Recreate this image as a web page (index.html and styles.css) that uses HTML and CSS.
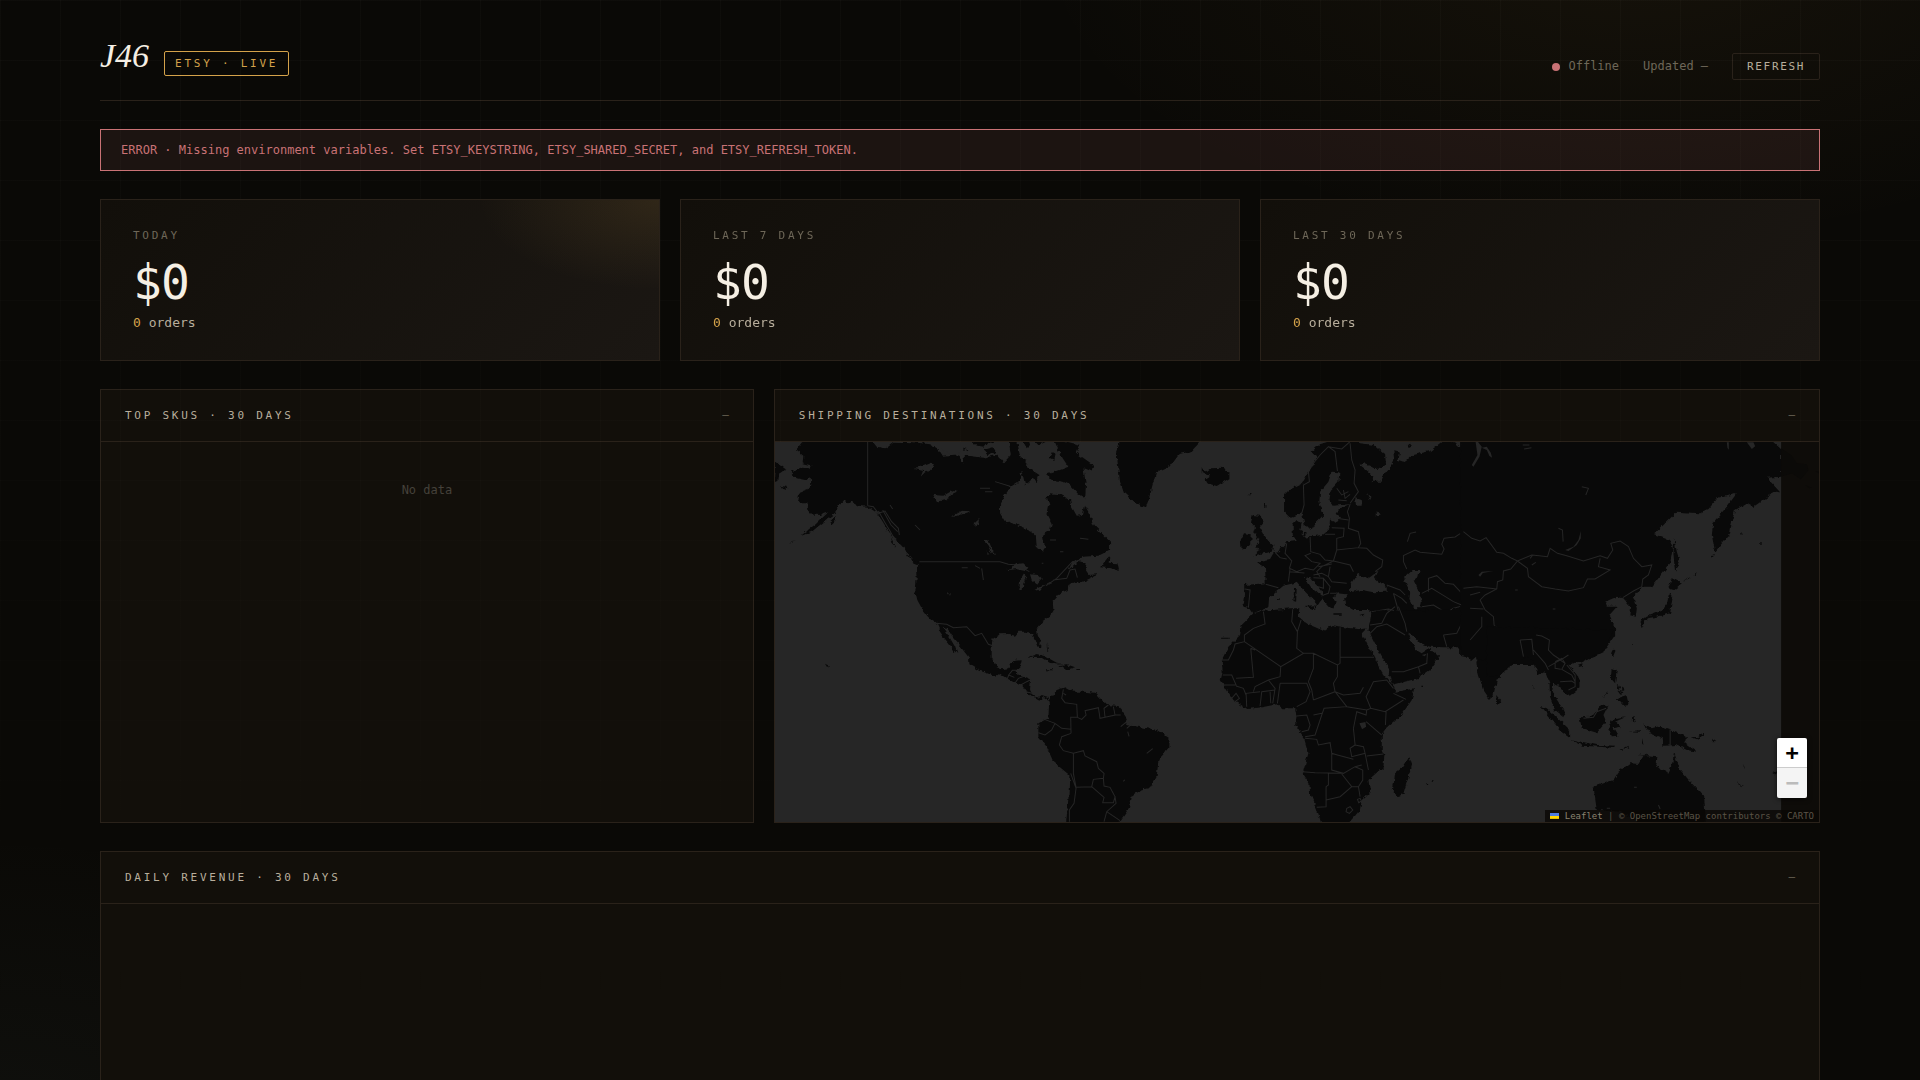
FILE: index.html
```
<!DOCTYPE html>
<html lang="en">
<head>
    <meta charset="UTF-8">
    <meta name="viewport" content="width=device-width, initial-scale=1.0">
    <title>J46 Etsy Live</title>
    <link rel="stylesheet" href="styles.css">
</head>
<body>
    <div class="container">
        <header class="header">
            <div class="brand">
                <h1 class="logo">J46</h1>
                <span class="badge">ETSY · LIVE</span>
            </div>
            <div class="status">
                <span class="status-item"><span class="dot"></span>Offline</span>
                <span>Updated —</span>
                <button class="refresh" type="button">REFRESH</button>
            </div>
        </header>

        <div class="error" role="alert">ERROR · Missing environment variables. Set ETSY_KEYSTRING, ETSY_SHARED_SECRET, and ETSY_REFRESH_TOKEN.</div>

        <!-- Totals -->
        <section class="stats">
            <div class="stat stat-today">
                <div class="stat-label">TODAY</div>
                <div class="stat-value">$0</div>
                <div class="stat-sub"><span class="accent">0</span> orders</div>
            </div>
            <div class="stat">
                <div class="stat-label">LAST 7 DAYS</div>
                <div class="stat-value">$0</div>
                <div class="stat-sub"><span class="accent">0</span> orders</div>
            </div>
            <div class="stat">
                <div class="stat-label">LAST 30 DAYS</div>
                <div class="stat-value">$0</div>
                <div class="stat-sub"><span class="accent">0</span> orders</div>
            </div>
        </section>

        <div class="columns">
            <section class="panel">
                <div class="panel-head">
                    <h2>TOP SKUS · 30 DAYS</h2>
                    <span class="meta">—</span>
                </div>
                <div class="empty">No data</div>
            </section>

            <section class="panel">
                <div class="panel-head">
                    <h2>SHIPPING DESTINATIONS · 30 DAYS</h2>
                    <span class="meta">—</span>
                </div>
                <div class="map">
                    <svg class="world" viewBox="15 21 3132 1140" preserveAspectRatio="xMidYMid slice" aria-hidden="true">
                        <defs>
                            <filter id="coast" color-interpolation-filters="sRGB">
                                <feTurbulence type="fractalNoise" baseFrequency="0.07" numOctaves="2" seed="4" result="n"/>
                                <feDisplacementMap in="SourceGraphic" in2="n" scale="14" xChannelSelector="R" yChannelSelector="G"/>
                            </filter>
                        </defs>
                        <rect class="sea" x="0" y="0" width="3033" height="1170"/>
                        <g>
                            <!-- North America -->
                            <g class="land" filter="url(#coast)">
                                <path d="M105 10L78 45 100 62 98 85 128 92 115 100 95 98 63 112 80 130 105 135 122 130 124 150 118 160 90 170 82 190 92 205 112 205 118 238 150 240 175 232 140 265 92 303 125 290 160 262 190 240 205 215 222 195 232 205 245 200 265 212 293 215 318 232 335 255 350 280 362 300 385 318 400 335 410 352 430 372 448 390 438 400 440 430 436 470 442 495 458 525 475 547 498 562 510 590 525 612 540 630 562 658 555 635 540 610 518 575 532 580 550 610 575 640 597 668 598 688 630 707 675 723 690 718 710 730 725 738 735 745 755 750 770 770 790 787 808 797 818 785 835 797 832 785 815 780 802 790 788 780 780 765 783 733 760 723 742 723 740 705 750 695 755 673 730 675 715 700 695 703 680 697 665 665 665 630 668 612 690 598 715 597 735 602 745 590 770 590 785 595 793 610 800 630 810 638 812 620 803 598 800 580 815 560 840 542 850 525 848 500 862 485 870 475 893 465 895 450 918 440 930 445 985 418 955 420 945 405 950 385 925 378 895 405 905 385 940 365 985 362 1020 345 1020 320 990 290 970 270 960 240 945 212 938 240 920 242 905 215 900 195 870 178 838 175 830 185 838 210 832 240 845 265 840 285 818 300 825 335 820 350 800 335 797 300 785 290 750 275 730 262 708 265 690 235 690 205 705 180 722 155 745 140 755 110 765 150 790 130 800 145 808 120 785 105 768 95 770 75 750 65 740 10 715 10 722 60 700 85 680 60 640 68 580 60 520 65 505 42 480 28 430 22 370 20 345 40 320 35 300 10Z"/>
                                <path d="M850 10L930 30 920 55 970 90 965 110 940 100 948 150 945 190 925 178 900 150 880 140 850 135 835 130 832 118 870 105 895 95 878 70 865 45Z"/>
                                <path d="M15 80L30 90 46 102 28 115 25 135 12 140ZM30 153l22 2 3 8-18-4ZM845 52l12 5-4 18-14-6ZM178 260l18-14 2 8-14 14ZM55 325l22-10-10 3ZM1010 373l8-10-2 20 26 2 5 22-30-8-27-2ZM165 686l12 6-6 4ZM362 305l14 30-8-8ZM405 355l38 26 8 12-20-8Z"/>
                                <path d="M778 665L800 657 825 664 860 683 885 686 840 684 812 667ZM868 690L890 688 915 697 888 705ZM828 703h18v3h-18ZM922 702h14v3h-14ZM830 625l5 22-4-5Z"/>
                                <path d="M600 10l15 20 25 5 12-15 18 5 10-15ZM580 38l15 5-14 12ZM640 45l30-8 8 15-22 8ZM755 10l15 30 10-10-5-20ZM785 10l20 20 20-8 10-12Z"/>
                            </g>
                            <g class="sea" filter="url(#coast)">
                                <path d="M430 98L455 95 485 83 492 95 482 108 465 112 452 125 460 105ZM490 180L520 182 550 165 565 168 540 180 530 195 500 200ZM545 243l28-16 28 2-25 8-24 8ZM640 315L655 315 665 340 675 360 665 355 652 330ZM650 345l8 15-5-3ZM615 260l12-10-2 20-12 8ZM712 405L735 388 760 385 775 398 765 408 740 403ZM762 415L772 425 760 445 758 465 748 465 750 435ZM780 418L805 420 815 430 800 448 785 435ZM788 468L810 455 828 452 805 465ZM825 450l25-13-4 8-18 6ZM530 470l12 8-2 4ZM515 40l25 15-15 5ZM565 55l22-14 10 8-15 15-4 22-6-12Z"/>
                            </g>
                            <g class="border">
                                <path d="M293 21V212M448 380H690M293 212L310 215 325 235 345 228 365 260 385 280 388 300M690 380L715 388 740 390 778 410M828 452L860 430 905 382 940 372M850 435L890 430 900 405 915 402 922 428M498 565L530 568 550 578 590 575 615 602 635 595 655 628 668 632M325 228l20 35 15 25 12 22M338 225l25 45 20 20M635 400l5 35M575 398h18M615 392l15 8M435 270l15 15M360 210l8 12M630 160h30M645 170h22M675 140l45 14M840 315h18M815 385h5M870 350h10M930 310l25 3"/>
                                <path d="M710 737L716 720 727 706 742 706M716 720L733 727M735 744L745 730 762 724M752 750L770 740 785 733M768 770l18 5"/>
                            </g>

                            <!-- South America -->
                            <g transform="translate(390 615)">
                                <path class="land" filter="url(#coast)" d="M445 182L470 150 495 142 520 155 550 155 585 158 600 175 620 195 655 198 680 235 675 255 725 262 770 270 808 295 808 320 775 360 770 410 750 445 725 448 695 470 690 500 655 550 498 550 505 480 508 405 460 365 440 320 415 290 415 250 445 235 447 195Z"/>
                                <path class="border" d="M490 148L485 175 495 188 530 193 532 232 512 232 513 280M532 232L545 238 558 225 555 212 595 203 600 235 615 232M615 232L612 205 625 195M640 200L645 225 615 232M645 225L662 225M425 235L465 250 485 265 513 268M465 250L455 270 435 285 415 278M513 280L485 290 478 315 490 332 520 340 550 332 555 348 590 365 595 385 612 400 610 415 580 418 575 440 528 442 520 400 520 340M512 400L528 445 522 490 508 510 508 545M610 415L612 438 630 442 645 470 640 488 608 488 612 472 575 440M645 470L648 490 620 515 612 545M620 515L660 542M662 260L680 245 695 252 680 265M490 160l8 5M740 340l18-14M683 275l4 14M670 424l4-5"/>
                            </g>

                            <!-- Greenland, Europe, Russia -->
                            <g transform="translate(1050 0)">
                                <g class="land" filter="url(#coast)">
                                    <path d="M0 10L-10 60 -5 100 0 140 12 175 45 205 78 217 88 185 100 140 108 112 150 92 175 58 215 48 250 10Z"/>
                                    <path d="M245 97L262 110 275 100 310 98 328 110 328 130 290 153 262 145 255 132 270 122 245 115Z"/>
                                    <path d="M398 240L425 243 430 260 418 275 432 300 445 318 460 332 455 350 430 355 400 362 420 345 405 340 418 320 410 305 400 290 405 275 392 262ZM372 295L395 298 393 330 365 345 362 315ZM435 207h4v8h-4ZM386 177h5v4h-5Z"/>
                                    <path d="M600 28L575 50 590 70 560 120 545 145 510 162 492 180 492 230 510 248 530 240 545 232 555 275 575 285 590 260 610 240 598 200 600 170 625 140 635 110 658 112 655 140 632 165 628 195 640 212 690 208 660 222 650 232 660 250 640 262 630 250 628 280 605 300 570 305 545 310 560 295 540 285 545 265 530 255 518 268 518 300 530 318 500 322 485 335 480 350 460 355 450 372 410 380 435 400 437 445 400 448 372 450 375 480 370 515 390 520 400 535 445 515 447 490 475 465 490 452 520 445 530 440 550 465 575 490 590 505 580 525 588 518 600 500 610 488 575 460 555 430 570 425 585 445 605 470 612 500 625 515 638 520 650 500 640 490 650 475 680 478 672 490 675 510 700 525 745 525 755 530 750 575 830 575 860 590 940 630 1120 640 1120 20 1090 10 1075 70 1060 95 1040 90 1035 50 1005 22 965 20 930 48 880 60 850 80 835 75 840 50 820 45 822 75 810 95 790 120 785 140 755 140 760 125 745 110 720 90 735 85 770 102 798 90 795 60 760 30 720 25 690 10 640 15Z"/>
                                    <path d="M522 460l8 0-2 40-8-2ZM553 513l28-2-4 12ZM640 535h25v4h-25ZM718 540l15-4-5 7ZM468 490h8v5h-8ZM860 30l10-4 6 8-10 5ZM303 608h26v3h-26Z"/>
                                </g>
                                <g class="sea" filter="url(#coast)">
                                    <path d="M690 450L712 415 725 425 745 430 775 408 765 428 800 458 800 470 760 472 725 465 690 472ZM850 430L875 408 898 408 895 425 880 435 895 465 905 500 900 520 880 520 868 495 870 470ZM705 190L722 195 725 212 708 212ZM740 170l14 20-4 8ZM770 228l10 12-10 6ZM640 248l10-5 5 15-10 5ZM545 272l12 16-12 16Z"/>
                                </g>
                                <g class="border">
                                    <path d="M545 235L552 210 550 150 568 140 565 110 580 85 600 60 625 35 645 50 652 108M625 35L665 42 690 20M690 25L695 75 705 105 702 145 715 170 690 205M650 160l15 20 20-10M670 165l5 25 15-12M655 195l25 2"/>
                                    <path d="M690 208L682 230 688 250 685 280 715 290 722 325 715 338 650 345 650 310 670 305 672 280 635 278M650 250L685 255M615 298h30M570 305L572 350 600 358 615 375 640 378 650 345M500 325L495 355 515 378 508 400 530 410 555 400 580 405 600 385 575 380 555 362 572 355M465 352L480 368 500 372M640 378L690 390 700 410M640 378L605 395 590 410 600 425M630 395L625 425 635 440 680 445M625 425L605 415 580 420M715 338L740 340 760 360 788 375 785 395 765 410M437 448L475 458M510 400L505 440M375 462L390 465 385 518M580 428L610 430 610 460 595 455M610 430L630 455 625 475 610 480M630 475L650 475M560 432l35 28M595 395l40-8M508 410l45 4"/>
                                    <path d="M800 450L840 465 855 480M820 475L830 510 835 530 805 522 755 530M805 522L798 550 765 570 750 575M835 530L845 570 860 595M820 475L845 490 860 505M905 515L940 510 965 525 968 590 980 605M968 590L1010 598 1040 565 1058 510M968 540L1000 520 1030 512 1060 510M905 475L935 460 960 475 1000 500 1030 512M925 470L925 430 950 422 975 445 1000 448 1030 480 1080 465M850 380L850 362 885 345 900 352 965 358 972 342 965 328 972 310 1005 306 1020 296 1040 292 1055 308 1080 300M850 380l10 22M862 320l8-25 18-4"/>
                                </g>
                            </g>

                            <!-- Africa, Arabia, India -->
                            <g transform="translate(1290 495)">
                                <g class="land" filter="url(#coast)">
                                    <path d="M160 40L190 32 275 25 298 25 295 50 330 75 370 92 395 75 430 82 480 88 500 85 485 100 520 165 545 215 580 262 590 275 642 265 635 300 600 350 560 385 545 405 545 450 553 465 550 500 505 540 510 575 485 600 480 630 440 675 365 675 350 625 330 580 328 550 308 520 325 460 312 415 285 375 290 350 285 325 250 325 235 312 185 322 142 327 100 300 62 240 68 215 65 180 85 140 120 105 125 75Z"/>
                                    <path d="M515 35L505 90 530 140 560 195 575 255 655 235 690 210 717 170 688 145 665 160 648 150 620 95 640 105 660 130 690 140 730 142 775 142 800 165 810 185 828 175 832 215 850 270 868 296 880 285 890 240 920 205 970 170 970 20Z"/>
                                    <path d="M888 285L905 305 892 315ZM628 472L636 495 610 580 595 590 578 575 585 520 610 500ZM679 549h5v4h-5ZM695 541h5v4h-5ZM664 257h5v4h-5Z"/>
                                </g>
                                <path class="sea" d="M478 370l18-4 2 14-12 8ZM690 152l10-10 8 14ZM665 165l15-4-6 8Z"/>
                                <g class="border">
                                    <path d="M190 35L195 72 160 85 133 105 133 125 105 132 100 150 85 180 65 180M133 125L242 200 310 160 290 145 292 95 275 65 278 28M292 95L303 60M420 82L420 172 522 172M420 172L420 190 412 195 340 160 310 160M412 195L412 230 400 250 405 275M340 160L340 205 325 245 335 270 340 300M242 200L240 230 205 240 165 260 160 275M152 145L160 232 108 235M152 145L165 150M68 225L95 225 108 255 65 255M240 250L320 250 330 275 318 305 290 320M240 250L232 310M205 240L225 265 218 310M210 275L212 310M180 318L185 275 225 270M140 320L138 280 180 275M108 258L130 265 138 285M95 295L108 280 118 295 105 305M340 300L405 275 440 320 372 325 365 345 345 405 315 410M405 275L430 285 480 280 490 262M440 320L500 330 512 325 498 290 520 245 560 240 580 265M512 325L555 335 610 300M580 280L618 298M558 335L556 375M500 330L498 345 470 335 465 360 460 385M498 365L545 405M460 385L465 435 450 445 455 470 495 460 490 440 465 435M495 460L505 510M500 468L550 462M315 415L350 418 355 435 390 428 395 460 412 465 460 478M395 460L395 510 430 520 465 500 485 495M308 515L345 518 425 520M385 520L385 555 378 560 378 620 350 622M378 600L420 590 455 560 425 522M455 560L475 560 488 540 488 510 465 500M475 560L480 590M440 625L450 620 458 630 448 640 438 635ZM472 598l8-3 4 8-8 5ZM290 348L320 345 330 375 325 390 305 395M365 340L340 345"/>
                                    <path d="M510 100L530 80 560 72 615 105M510 75L545 70 560 40 585 20M575 215L610 215 655 200 680 190 682 160M655 200L660 220M730 105L770 100 785 70 815 40M740 140L730 105M790 160L812 140 805 120 845 80 848 50 880 80 895 100 958 130M895 95L958 120M845 80L840 45M595 20L615 70 620 95"/>
                                </g>
                            </g>

                            <!-- East Asia -->
                            <g transform="translate(2100 0)">
                                <g class="land" filter="url(#coast)">
                                    <path d="M-30 10L900 10 933 40 933 125 890 128 930 172 915 170 850 215 830 205 795 225 785 260 780 295 735 350 725 300 730 262 770 215 800 175 765 185 745 187 715 222 690 235 620 230 552 298 600 315 608 340 600 385 545 455 515 455 490 490 500 520 497 545 478 540 480 515 460 490 440 485 405 500 410 515 440 515 418 540 435 575 435 600 400 650 335 680 200 690 100 690 -30 660Z"/>
                                    <path d="M597 475L607 490 600 535 560 545 530 550 515 580 508 560 530 545 570 530 590 505ZM605 430L635 445 610 465 595 460ZM612 310L620 350 628 375 615 410 610 360ZM812 290l6 8-3 2ZM870 325h5v4h-5ZM722 364l10-8-4 8ZM640 440l20-14-5 7ZM670 422l10-7-3 5ZM486 627h5v2h-5Z"/>
                                </g>
                                <path class="sea" d="M285 345L310 335 325 315 332 288 332 310 320 330 295 348ZM25 420L35 410 70 408 38 414 30 425ZM15 10L35 35 28 65 10 95 5 90 22 60ZM35 38l15-3 12 18 4 15-8-5-8-18ZM0 680l18-15 4 60-22 0ZM830 22l20 0 5 12-10 8ZM770 22h6v22l-4-5Z"/>
                                <g class="border">
                                    <path d="M-20 290L5 310 30 318 48 308 80 352 100 355 125 370 142 378 185 360 232 365 240 340 262 355 290 362 340 378 390 362 412 370 428 345 422 325 450 318 475 335 490 370 515 395 545 390 535 420 518 432 515 455M142 378L172 400 175 425 215 455 255 462 295 468 340 458 352 432 375 432 420 405 385 395 390 370M142 378L122 402 100 408 98 435 82 440 80 462 45 480 30 495 45 525 70 545 72 570 90 590 150 612 155 625 120 620 85 605 75 580M150 612L182 612 185 622 155 625M205 605L220 605 235 615 240 650 258 660 285 658 310 670M182 630L185 660M-20 460L20 455 80 462M0 480l30-8M0 520L40 522M35 545L35 575 0 615M458 488L490 468 515 455M158 30h20M162 42l22-4M335 155l20 5-8 20M265 280l12 5 2 35M180 370l8-10M135 465h8M248 522h8M185 390l12-8"/>
                                </g>
                            </g>

                            <!-- South-east Asia and Australia -->
                            <g transform="translate(2190 495)">
                                <g class="land" filter="url(#coast)">
                                    <path d="M340 90L310 155 245 185 215 185 205 195 238 235 238 265 205 290 180 260 160 250 155 275 190 330 193 352 165 330 150 290 148 250 135 215 115 225 95 180 80 170 50 180 0 225 -40 230 -40 80Z"/>
                                    <path d="M120 318L140 325 210 390 210 412 180 390ZM210 418L290 435 345 437 340 443 250 437ZM238 352L275 350 305 312 322 320 310 345 318 365 290 398 245 385ZM335 360L375 352 345 365 362 380 340 385 355 410 335 412 325 385ZM430 370L455 385 480 378 530 395 560 415 555 430 590 455 560 450 530 435 490 437 488 415 450 400Z"/>
                                    <path d="M280 560L340 540 355 515 390 490 415 492 430 468 472 472 465 495 505 518 515 495 522 458 540 510 575 550 612 590 617 660 612 675 430 675 360 635 290 630Z"/>
                                    <path d="M335 205L350 210 345 250 332 235ZM350 295L380 285 385 312 368 315ZM350 255l10 5-4 12ZM365 258l8 12-6 4ZM352 272l14 4-4 10ZM340 145L347 150 338 172 333 160ZM235 195L250 190 248 205ZM308 292l18-18-4 8ZM575 412l22-2 10-12 3 4-15 17ZM385 394l35-3v4ZM400 348l4 20-6-8ZM358 452l25-12 5 2-24 11ZM415 466l25-2v4ZM708 543l24 16-12-4ZM630 412l18 14-4 1ZM655 430l16 8ZM682 450l10 8ZM728 492l9 16-6-8ZM820 520l10-6v10ZM595 388l14 10ZM97 250l3 15-4-5ZM125 342l12 10ZM145 370l8 10ZM426 415l4 20-5-6Z"/>
                                </g>
                                <g class="border">
                                    <path d="M510 388V440M60 120L95 118 100 165M60 120L70 170M108 105L125 108 148 120 145 150 160 165 182 180 205 165M100 150L135 190 145 210M145 200L180 180 195 190 185 208 215 225 225 245M182 208L165 205 165 190M200 195L225 225 225 260 205 270M180 245L215 243 225 250M250 355L280 352 290 335 318 325M320 625h10M475 615l5 12M402 562h8M165 185l20-10 10 15"/>
                                </g>
                            </g>
                        </g>
                        <path class="tile-fade" d="M3033 40L3065 62 3080 85 3110 88 3115 105 3092 133 3065 115 3033 125ZM3135 108l12 2v6ZM3105 150l20 8-8 2Z"/>
                    </svg>
                    <div class="zoom">
                        <button type="button" aria-label="Zoom in">+</button>
                        <button type="button" aria-label="Zoom out" disabled>−</button>
                    </div>
                    <div class="attribution">
                        <a href="#"><svg class="flag" viewBox="0 0 9 6" aria-hidden="true"><path fill="#4C7BE1" d="M0 0h9v3H0z"/><path fill="#FFD500" d="M0 3h9v2H0z"/><path fill="#E0BC00" d="M0 5h9v1H0z"/></svg> Leaflet</a> | © OpenStreetMap contributors © CARTO
                    </div>
                </div>
            </section>
        </div>

        <section class="panel">
            <div class="panel-head">
                <h2>DAILY REVENUE · 30 DAYS</h2>
                <span class="meta">—</span>
            </div>
            <div class="chart"></div>
        </section>
    </div>
</body>
</html>
```
FILE: styles.css
```
:root {
    --bg: #0a0906;
    --panel: #120f0a;
    --panel-2: #1b1713;
    --line: #2a221a;
    --text: #f5efe4;
    --text-dim: #b8ae9c;
    --muted: #6e6758;
    --faint: #45413a;
    --gold: #d4a24a;
    --red: #c97275;
}

* {
    box-sizing: border-box;
    margin: 0;
    padding: 0;
}

body {
    min-height: 100vh;
    font-family: "DejaVu Sans Mono", monospace;
    font-size: 12px;
    line-height: 16px;
    color: var(--text);
    background-color: var(--bg);
    background-image:
        radial-gradient(ellipse 600px 300px at 85% -5%, rgba(212, 162, 74, 0.06), transparent),
        radial-gradient(ellipse 500px 300px at 0% 105%, rgba(120, 150, 150, 0.05), transparent);
    background-attachment: fixed;
}

/* faint grid over the page */
body::before {
    content: "";
    position: fixed;
    inset: 0;
    pointer-events: none;
    background-image:
        linear-gradient(rgba(245, 239, 228, 0.024) 1px, transparent 1px),
        linear-gradient(90deg, rgba(245, 239, 228, 0.024) 1px, transparent 1px);
    background-size: 60px 60px;
    -webkit-mask-image: linear-gradient(to bottom, #000, transparent);
    mask-image: linear-gradient(to bottom, #000, transparent);
}

.container {
    display: flex;
    flex-direction: column;
    gap: 28px;
    max-width: 1800px;
    margin: 0 auto;
    padding: 36px 40px;
}

/* Header */
.header {
    display: flex;
    justify-content: space-between;
    align-items: flex-end;
    padding-bottom: 20px;
    border-bottom: 1px solid var(--line);
}

.brand {
    display: flex;
    align-items: baseline;
    gap: 15px;
    padding-bottom: 4px;
}

.logo {
    font-family: "Liberation Serif", serif;
    font-style: italic;
    font-weight: 400;
    font-size: 34px;
    line-height: 40px;
}

.badge {
    padding: 4px 10px;
    font-size: 11px;
    line-height: 15px;
    letter-spacing: 0.25em;
    color: var(--gold);
    border: 1px solid var(--gold);
    border-radius: 2px;
}

.status {
    display: flex;
    align-items: center;
    gap: 24px;
    line-height: 15px;
    color: var(--muted);
}

.status-item {
    display: flex;
    align-items: center;
    gap: 8px;
}

.dot {
    width: 8px;
    height: 8px;
    border-radius: 50%;
    background: var(--red);
}

.refresh {
    padding: 6px 14px;
    font-family: inherit;
    font-size: 11px;
    line-height: 13px;
    letter-spacing: 0.15em;
    color: var(--text-dim);
    background: none;
    border: 1px solid var(--line);
    border-radius: 2px;
    cursor: pointer;
}

.refresh:hover {
    color: var(--gold);
    border-color: var(--gold);
}

.error {
    padding: 12px 20px;
    color: var(--red);
    background: rgba(201, 114, 117, 0.1);
    border: 1px solid var(--red);
}

/* Totals */
.stats {
    display: grid;
    grid-template-columns: repeat(3, 1fr);
    gap: 20px;
}

.stat {
    position: relative;
    padding: 28px 32px;
    background: linear-gradient(135deg, var(--panel), var(--panel-2));
    border: 1px solid var(--line);
}

.stat-today {
    background:
        radial-gradient(ellipse 180px 90px at 100% 0%, rgba(212, 162, 74, 0.12), transparent),
        linear-gradient(135deg, var(--panel), var(--panel-2));
}

.stat-label {
    margin-bottom: 14px;
    font-size: 11px;
    line-height: 16px;
    letter-spacing: 0.25em;
    color: var(--muted);
}

.stat-value {
    margin-bottom: 8px;
    font-size: 48px;
    line-height: 48px;
    letter-spacing: -0.02em;
}

.stat-sub {
    font-size: 13px;
    line-height: 18px;
    color: var(--text-dim);
}

.accent {
    color: var(--gold);
}

/* Panels */
.columns {
    display: grid;
    grid-template-columns: 1fr 1.6fr;
    gap: 20px;
}

.panel {
    background: var(--panel);
    border: 1px solid var(--line);
}

.panel-head {
    display: flex;
    justify-content: space-between;
    align-items: flex-start;
    padding: 18px 24px;
    font-size: 11px;
    line-height: 15px;
    border-bottom: 1px solid var(--line);
}

.panel-head h2 {
    font-size: 11px;
    font-weight: 400;
    letter-spacing: 0.25em;
    color: var(--text-dim);
}

.meta {
    line-height: 13px;
    color: var(--muted);
}

.empty {
    padding: 40px 24px;
    text-align: center;
    color: var(--faint);
}

.chart {
    height: 320px;
}

/* Map */
.map {
    position: relative;
    height: 380px;
    overflow: hidden;
    background: #0e0c09;
}

.world {
    display: block;
    width: 100%;
    height: 100%;
}

.sea {
    fill: #262626;
}

.land {
    fill: #090909;
}

.border {
    fill: none;
    stroke: #262626;
    stroke-width: 3;
}

.tile-fade {
    fill: #0b0a08;
}

.zoom {
    position: absolute;
    right: 12px;
    bottom: 24px;
    width: 30px;
    border-radius: 2px;
    overflow: hidden;
    box-shadow: 0 1px 5px rgba(0, 0, 0, 0.65);
}

.zoom button {
    display: block;
    width: 30px;
    height: 30px;
    font: bold 22px/30px "DejaVu Sans Mono", monospace;
    color: #000;
    background: #fff;
    border: none;
    cursor: pointer;
}

.zoom button:first-child {
    border-bottom: 1px solid #ccc;
}

.zoom button:disabled {
    color: #bbb;
    background: #f4f4f4;
    cursor: default;
}

.attribution {
    position: absolute;
    right: 0;
    bottom: 0;
    padding: 0 5px;
    font-size: 9px;
    line-height: 12px;
    color: #5a5346;
    background: rgba(10, 8, 5, 0.8);
}

.attribution a {
    color: #8a8270;
    text-decoration: none;
}

.flag {
    width: 9px;
    height: 6px;
}
```
